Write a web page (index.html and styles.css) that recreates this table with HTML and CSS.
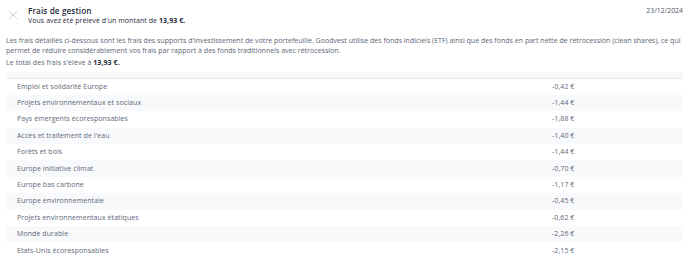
FILE: index.html
```html
<!DOCTYPE html>
<html lang="fr">
<head>
<meta charset="utf-8">
<link rel="stylesheet" href="styles.css">
</head>
<body>
<div class="panel">
  <div class="header">
    <svg class="close" width="10" height="10" viewBox="0 0 10 10"><path d="M1 1L9 9M9 1L1 9" stroke="#c4c8cf" stroke-width="0.9" fill="none"/></svg>
    <div class="titles">
      <div class="title">Frais de gestion</div>
      <div class="subtitle">Vous avez été prélevé d'un montant de <b>13,93 €.</b></div>
    </div>
    <div class="date">23/12/2024</div>
  </div>
  <p class="desc">Les frais détaillés ci-dessous sont les frais des supports d'investissement de votre portefeuille. Goodvest utilise des fonds indiciels (ETF) ainsi que des fonds en part nette de rétrocession (clean shares), ce qui permet de réduire considérablement vos frais par rapport à des fonds traditionnels avec rétrocession.</p>
  <p class="total">Le total des frais s'élève à <b>13,93 €.</b></p>
  <table class="fees">
    <thead><tr><th></th><th></th></tr></thead>
    <tbody>
      <tr><td>Emploi et solidarité Europe</td><td class="amt">-0,42 €</td></tr>
      <tr><td>Projets environnementaux et sociaux</td><td class="amt">-1,44 €</td></tr>
      <tr><td>Pays émergents écoresponsables</td><td class="amt">-1,88 €</td></tr>
      <tr><td>Accès et traitement de l'eau</td><td class="amt">-1,40 €</td></tr>
      <tr><td>Forêts et bois</td><td class="amt">-1,44 €</td></tr>
      <tr><td>Europe initiative climat</td><td class="amt">-0,70 €</td></tr>
      <tr><td>Europe bas carbone</td><td class="amt">-1,17 €</td></tr>
      <tr><td>Europe environnementale</td><td class="amt">-0,45 €</td></tr>
      <tr><td>Projets environnementaux étatiques</td><td class="amt">-0,62 €</td></tr>
      <tr><td>Monde durable</td><td class="amt">-2,26 €</td></tr>
      <tr><td>Etats-Unis écoresponsables</td><td class="amt">-2,15 €</td></tr>
    </tbody>
  </table>
</div>
</body>
</html>
```
FILE: styles.css
```css
html, body {
  margin: 0;
  padding: 0;
  background: #ffffff;
}
body {
  font-family: "Open Sans", "DejaVu Sans", sans-serif;
  color: #5b6577;
}
.panel {
  padding: 6px 7px 0 6px;
}
.header {
  display: flex;
  align-items: flex-start;
}
.close {
  margin: 4px 0 0 2px;
  flex: none;
}
.titles {
  margin-left: 10px;
  flex: 1;
}
.title {
  font-size: 8.2px;
  line-height: 10px;
  font-weight: 600;
  color: #1f2a3c;
  letter-spacing: 0.1px;
}
.subtitle {
  font-size: 7px;
  line-height: 10px;
  color: #1f2a3c;
  letter-spacing: 0.06px;
}
.subtitle b, .total b {
  font-weight: 700;
  color: #1f2a3c;
}
.date {
  font-size: 6.8px;
  line-height: 10px;
  color: #4a5263;
  letter-spacing: 0.06px;
}
.desc {
  margin: 10px 0 0 0;
  font-size: 7px;
  line-height: 10px;
  color: #5b6577;
  letter-spacing: 0.02px;
}
.total {
  margin: 2px 0 0 0;
  font-size: 7px;
  line-height: 10px;
  color: #5b6577;
  letter-spacing: 0.08px;
}
.fees {
  margin-top: 4px;
  width: 100%;
  border-collapse: collapse;
  font-size: 7px;
  letter-spacing: 0.08px;
  color: #5d687a;
}
.fees thead th {
  height: 6px;
  padding: 0;
  background: #f8f9fb;
  border-bottom: 1.5px solid #e6e8ec;
}
.fees td {
  height: 16.4px;
  padding: 0 0 0 11px;
  box-sizing: border-box;
  line-height: 8px;
}
.fees td.amt {
  width: 142px;
}
.fees tbody tr:nth-child(even) td {
  background: #f8f9fb;
}
```
